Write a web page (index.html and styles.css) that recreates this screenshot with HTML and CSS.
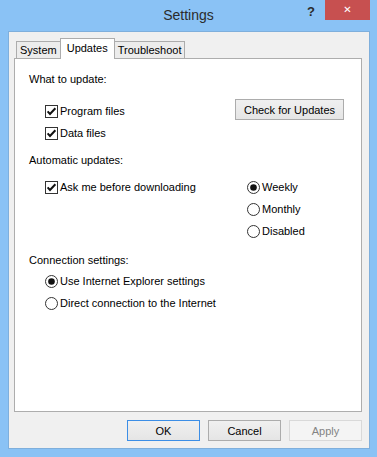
FILE: index.html
```html
<!DOCTYPE html>
<html lang="en">
<head>
  <meta charset="UTF-8">
  <meta name="viewport" content="width=device-width, initial-scale=1.0">
  <link rel="stylesheet" href="styles.css">
  <title>Settings</title>
</head>
<body>

  <div class="window">
    <header class="titlebar">
      <span></span>
      <h1 class="title">Settings</h1>
      <div class="controls">
        <span class="help">?</span>
        <span class="close">&#x2715;</span>
      </div>
    </header>

    <main class="client">
      <div class="tabs">
        <div class="tab">System</div>
        <div class="tab active">Updates</div>
        <div class="tab">Troubleshoot</div>
      </div>

      <div class="panel">
        <div class="group-label">What to update:</div>
        <div class="what-row">
          <div class="options">
            <label class="option">
              <svg class="box" width="13" height="13" viewBox="0 0 13 13"><rect x="0.5" y="0.5" width="12" height="12" fill="#fff" stroke="#333"/><path d="M2.6 6.4 L5 9 L10.4 3.2" fill="none" stroke="#111" stroke-width="2"/></svg>
              Program files
            </label>
            <label class="option">
              <svg class="box" width="13" height="13" viewBox="0 0 13 13"><rect x="0.5" y="0.5" width="12" height="12" fill="#fff" stroke="#333"/><path d="M2.6 6.4 L5 9 L10.4 3.2" fill="none" stroke="#111" stroke-width="2"/></svg>
              Data files
            </label>
          </div>
          <button class="btn check-btn">Check for Updates</button>
        </div>

        <div class="group-label">Automatic updates:</div>
        <div class="auto-row">
          <div class="options">
            <label class="option">
              <svg class="box" width="13" height="13" viewBox="0 0 13 13"><rect x="0.5" y="0.5" width="12" height="12" fill="#fff" stroke="#333"/><path d="M2.6 6.4 L5 9 L10.4 3.2" fill="none" stroke="#111" stroke-width="2"/></svg>
              Ask me before downloading
            </label>
          </div>
          <div class="options">
            <label class="option">
              <svg class="box" width="13" height="13" viewBox="0 0 13 13"><circle cx="6.5" cy="6.5" r="6" fill="#fff" stroke="#333"/><circle cx="6.5" cy="6.5" r="3.3" fill="#111"/></svg>
              Weekly
            </label>
            <label class="option">
              <svg class="box" width="13" height="13" viewBox="0 0 13 13"><circle cx="6.5" cy="6.5" r="6" fill="#fff" stroke="#333"/></svg>
              Monthly
            </label>
            <label class="option">
              <svg class="box" width="13" height="13" viewBox="0 0 13 13"><circle cx="6.5" cy="6.5" r="6" fill="#fff" stroke="#333"/></svg>
              Disabled
            </label>
          </div>
        </div>

        <div class="group-label">Connection settings:</div>
        <div class="options conn">
          <label class="option">
            <svg class="box" width="13" height="13" viewBox="0 0 13 13"><circle cx="6.5" cy="6.5" r="6" fill="#fff" stroke="#333"/><circle cx="6.5" cy="6.5" r="3.3" fill="#111"/></svg>
            Use Internet Explorer settings
          </label>
          <label class="option">
            <svg class="box" width="13" height="13" viewBox="0 0 13 13"><circle cx="6.5" cy="6.5" r="6" fill="#fff" stroke="#333"/></svg>
            Direct connection to the Internet
          </label>
        </div>
      </div>

      <div class="actions">
        <button class="btn default">OK</button>
        <button class="btn">Cancel</button>
        <button class="btn" disabled>Apply</button>
      </div>
    </main>
  </div>

</body>
</html>
```

FILE: styles.css
```css
body {
  margin: 0;
  font-family: "Liberation Sans", Arial, sans-serif;
  font-size: 11px;
  color: #000;
  background-color: #8ac2f5;
}

.window {
  width: 377px;
  height: 457px;
  background-color: #8ac2f5;
}

.titlebar {
  display: grid;
  grid-template-columns: 1fr auto 1fr;
  height: 31px;
}

.title {
  margin: 0;
  font-size: 14px;
  font-weight: normal;
  line-height: 31px;
  color: #2b2b2b;
}

.controls {
  justify-self: end;
  display: flex;
  align-items: flex-start;
  padding-right: 7px;
}

.help {
  width: 14px;
  text-align: center;
  font-weight: bold;
  font-size: 13px;
  line-height: 24px;
  color: #2b2b2b;
}

.close {
  width: 45px;
  height: 20px;
  margin-left: 7px;
  background-color: #c75050;
  color: #fff;
  font-family: "DejaVu Sans", sans-serif;
  font-size: 10px;
  font-weight: bold;
  text-align: center;
  line-height: 20px;
}

.client {
  box-sizing: border-box;
  width: 362px;
  height: 418px;
  margin-left: 8px;
  padding: 6px 0 0 5px;
  background-color: #f0f0f0;
  border: 1px solid #7fafdc;
}

.tabs {
  display: flex;
  align-items: flex-end;
  height: 21px;
  margin-left: 2px;
  margin-bottom: -1px;
}

.tab {
  box-sizing: border-box;
  height: 18px;
  padding: 0 3px;
  border: 1px solid #acacac;
  background-color: #ececec;
  line-height: 17px;
}

.tab + .tab {
  margin-left: -1px;
}

.tab.active {
  position: relative;
  z-index: 1;
  height: 21px;
  padding: 0 6px;
  border-bottom: none;
  background-color: #fff;
  line-height: 18px;
}

.panel {
  box-sizing: border-box;
  width: 348px;
  height: 354px;
  padding: 12px 0 0 14px;
  background-color: #fff;
  border: 1px solid #adadad;
}

.group-label {
  line-height: 16px;
}

.options {
  display: flex;
  flex-direction: column;
}

.option {
  display: flex;
  align-items: center;
  gap: 2px;
  height: 22px;
}

.what-row {
  display: grid;
  grid-template-columns: 206px auto;
  align-items: start;
  margin-top: 12px;
  margin-bottom: 8px;
}

.what-row .options {
  margin-top: 1px;
  margin-left: 16px;
}

.auto-row {
  display: grid;
  grid-template-columns: 218px auto;
  margin-top: 8px;
  margin-bottom: 10px;
}

.auto-row .options:first-child,
.conn {
  margin-left: 16px;
}

.conn {
  margin-top: 2px;
}

.btn {
  box-sizing: border-box;
  height: 21px;
  padding: 0;
  font-family: inherit;
  font-size: 11px;
  color: #000;
  background: linear-gradient(#f0f0f0, #e5e5e5);
  border: 1px solid #acacac;
  border-radius: 0;
}

.check-btn {
  width: 109px;
}

.actions {
  display: flex;
  justify-content: flex-end;
  gap: 8px;
  width: 348px;
  margin-top: 8px;
}

.actions .btn {
  width: 73px;
}

.btn.default {
  border-color: #3c8ee6;
}

.btn:disabled {
  color: #838383;
  background: #f4f4f4;
  border-color: #d9d9d9;
}
```
